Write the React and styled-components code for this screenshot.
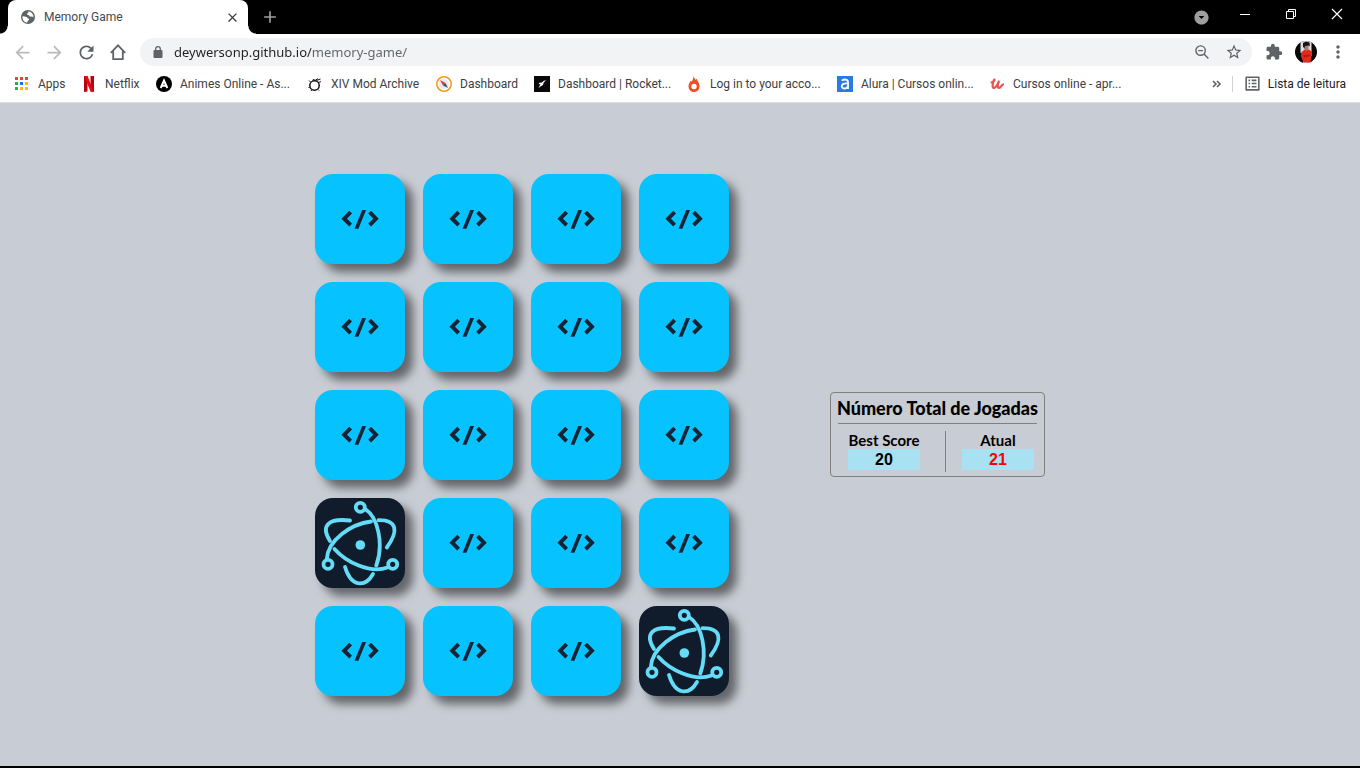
import React from "react";
import styled, { createGlobalStyle, css } from "styled-components";
import {
  MdAdd,
  MdArrowBack,
  MdArrowDropDownCircle,
  MdArrowForward,
  MdClose,
  MdExtension,
  MdListAlt,
  MdMoreVert,
  MdRefresh,
  MdStarBorder,
} from "react-icons/md";

const GlobalStyle = createGlobalStyle`
  *, *::before, *::after { box-sizing: border-box; }
  body {
    margin: 0;
    font-family: Roboto, "Open Sans", sans-serif;
    font-size: 12px;
    color: #3c4043;
  }
  button, input { font: inherit; color: inherit; }
`;

const Window = styled.div`
  display: flex;
  flex-direction: column;
  min-height: 100vh;
  border-bottom: 2px solid #000;
  background: #c8ccd4;
`;

const TabStrip = styled.header`
  display: flex;
  height: 34px;
  padding-left: 8px;
  background: #000;
`;

const Tab = styled.div`
  position: relative;
  display: flex;
  align-items: center;
  gap: 8px;
  width: 240px;
  padding: 0 8px 0 12px;
  border-radius: 8px 8px 0 0;
  background: #fff;
  color: #45494d;

  &::before,
  &::after {
    content: "";
    position: absolute;
    bottom: 0;
    width: 8px;
    height: 8px;
  }
  &::before {
    right: 100%;
    background: radial-gradient(circle at 0 0, #000 7px, #fff 8px);
  }
  &::after {
    left: 100%;
    background: radial-gradient(circle at 100% 0, #000 7px, #fff 8px);
  }
`;

const TabTitle = styled.span`
  flex: 1;
  line-height: 16px;
`;

const IconButton = styled.button`
  display: inline-flex;
  align-items: center;
  justify-content: center;
  flex: none;
  width: ${({ $width = 28 }) => $width}px;
  height: ${({ $height = 28 }) => $height}px;
  padding: 0;
  border: 0;
  border-radius: 50%;
  background: none;
  color: ${({ $color = "#5f6368" }) => $color};
`;

const NewTabSlot = styled.div`
  display: flex;
  align-items: center;
  flex: 1;
  padding-left: 8px;
`;

const Caption = styled.div`
  display: flex;
  align-items: flex-start;
`;

const MenuSlot = styled.div`
  display: flex;
  align-items: center;
  height: 34px;
  margin-right: 7px;
`;

const Toolbar = styled.nav`
  display: flex;
  align-items: center;
  gap: 4px;
  height: 36px;
  padding: 0 8px;
  background: #fff;
`;

const Omnibox = styled.form`
  display: flex;
  align-items: center;
  flex: 1;
  gap: 4px;
  height: 28px;
  margin: 0 4px;
  padding: 0 4px 0 11px;
  border-radius: 14px;
  background: #f1f3f4;
  color: #5f6368;
`;

const AddressInput = styled.input`
  flex: 1;
  min-width: 0;
  height: 20px;
  margin-left: 5px;
  padding: 0;
  border: 0;
  outline: 0;
  font-family: "Noto Sans", "Open Sans", sans-serif;
  font-size: 13px;
  line-height: 20px;
  color: transparent;
  background: linear-gradient(90deg, #202124 137px, #5f6368 137px);
  background-clip: text;
  -webkit-background-clip: text;
`;

const BookmarkBar = styled.nav`
  display: flex;
  align-items: center;
  height: 33px;
  padding: 0 14px 5px;
  border-bottom: 1px solid #dadce0;
  background: #fff;
`;

const bookmarkLook = css`
  display: flex;
  align-items: center;
  gap: 8px;
  line-height: 16px;
  white-space: nowrap;
  text-decoration: none;
  color: #3c4043;
  svg { flex: none; }
`;

const Bookmark = styled.a`
  ${bookmarkLook}
  width: ${({ $width }) => $width}px;
`;

const BarEnd = styled.div`
  display: flex;
  align-items: center;
  gap: 10px;
  margin-left: auto;
`;

const Separator = styled.span`
  width: 1px;
  height: 16px;
  background: #cfd1d4;
`;

const ReadingList = styled.button`
  ${bookmarkLook}
  gap: 6px;
  padding: 0;
  border: 0;
  background: none;
  color: #202124;
  > svg { color: #5f6368; }
`;

const Game = styled.main`
  display: flex;
  flex: 1;
  align-items: center;
  justify-content: center;
  gap: 101px;
`;

const Board = styled.section`
  display: grid;
  grid-template-columns: repeat(4, 90px);
  gap: 18px;
`;

const Card = styled.button`
  width: 90px;
  height: 90px;
  padding: 0;
  border: 0;
  border-radius: 18px;
  background: ${({ $open }) => ($open ? "#101c2c" : "#06c2ff")};
  box-shadow: 8px 8px 10px rgba(0, 0, 0, 0.5);
  svg { display: block; }
`;

const ScorePanel = styled.section`
  width: 215px;
  padding: 5px 7px 4px;
  border: 1px solid #808080;
  border-radius: 4px;
  font-family: Lato, sans-serif;
  color: #000;
`;

const ScoreTitle = styled.h1`
  display: flex;
  justify-content: center;
  margin: 0;
  padding-bottom: 5px;
  border-bottom: 1px solid #808080;
  font-size: 18px;
  font-weight: 900;
  line-height: 20px;
  white-space: nowrap;
`;

const ScoreRow = styled.div`
  display: flex;
  justify-content: space-between;
  padding: 7px 3px 0 10px;
`;

const Score = styled.div`
  display: flex;
  flex-direction: column;
  width: 72px;
  text-align: center;
`;

const ScoreLabel = styled.span`
  font-size: 15px;
  font-weight: 700;
  line-height: 18px;
  white-space: nowrap;
`;

const ScoreValue = styled.output`
  background: #a8e1f1;
  font: bold 16px/21px "Liberation Sans", Arial, sans-serif;
  color: ${({ $color }) => $color};
`;

const ScoreDivider = styled.span`
  width: 1px;
  height: 41px;
  margin-left: 9px;
  background: #808080;
`;

const CodeMark = () => (
  <svg width="90" height="90" viewBox="0 0 90 90" fill="none" stroke="#152332" strokeWidth="3.9" aria-hidden="true">
    <path d="M35.600 38.200 29.200 44.700l6.400 6.500M54.600 38.200 61 44.700l-6.400 6.500" />
    <path fill="#152332" stroke="none" d="M47.200 36h3.800L43.400 54.700h-3.800z" />
  </svg>
);

const ElectronMark = () => (
  <svg width="90" height="90" viewBox="0 0 90 90" fill="none" stroke="#65dcf7" strokeWidth="3.8" strokeLinecap="round" aria-hidden="true">
    <circle cx="45.3" cy="9.3" r="4.500" />
    <circle cx="13" cy="66.3" r="4.500" />
    <circle cx="77.7" cy="66.3" r="4.500" />
    <circle cx="45.3" cy="47" r="4.800" fill="#65dcf7" stroke="none" />
    <path d="M50 11C63 19 69 46 61.300 67.500" />
    <path d="M11.800 61C13 42 36 26 56 23.500" />
    <path d="M19.500 51C31 64 55 76 72.500 69.500" />
    <path d="M35 22.500C14 20 5 27 15 43" />
    <path d="M63.500 22.200C82 22 84 33 71.800 49.500" />
    <path d="M30 69C36 89 50 90 58 76" />
  </svg>
);

const GlobeIcon = () => (
  <svg width="16" height="16" viewBox="0 0 16 16" aria-hidden="true">
    <circle cx="8" cy="8" r="7" fill="#5f6368" />
    <path
      fill="#fff"
      d="M2.500 7.200c1.300.2 3 .2 4.200.8.800.4.600 1.300 1.500 1.500 1 .2 1.200.8.600 1.500-.8.900-1.300 1.200-1.600 2.600-2.900-.3-5-2.900-4.700-6.400zM8.500 2.300c-.2.700.2 1.300-.5 1.700-.8.400-1.300.9-.9 1.600.5.700 1.700.3 2.200 1.100.4.700.9 1.100 1.700.9.800-.3 1.400-.2 2.500.6-.1-3-2-5.300-5-5.900z"
    />
  </svg>
);

const LockIcon = () => (
  <svg width="14" height="14" viewBox="0 0 14 14" fill="none" aria-hidden="true">
    <path fill="currentColor" d="M3.500 5h7a1 1 0 0 1 1 1v6a1 1 0 0 1-1 1h-7a1 1 0 0 1-1-1V6a1 1 0 0 1 1-1z" />
    <path stroke="currentColor" strokeWidth="1.300" d="M4.700 5.500V4a2.300 2.300 0 0 1 4.600 0v1.500" />
  </svg>
);

const HomeIcon = () => (
  <svg width="16" height="16" viewBox="0 0 16 16" fill="none" stroke="currentColor" strokeWidth="1.8" aria-hidden="true">
    <path d="M.8 8.800 8 1.400l7.200 7.400M3.200 7.200v7.900h9.600V7.200" />
  </svg>
);

const ZoomOutIcon = () => (
  <svg width="14" height="14" viewBox="0 0 14 14" fill="none" stroke="currentColor" strokeWidth="1.400" aria-hidden="true">
    <circle cx="5.600" cy="5.600" r="4.700" />
    <path d="M3.200 5.600H8M9 9l4.400 4.400" />
  </svg>
);

const Avatar = () => (
  <svg width="22" height="22" viewBox="0 0 22 22" aria-hidden="true">
    <clipPath id="avatarRound"><circle cx="11" cy="11" r="11" /></clipPath>
    <g clipPath="url(#avatarRound)">
      <path fill="#090909" d="M0 0h22v22H0z" />
      <path fill="#d9dde1" d="M5.500 0h11v22h-11z" />
      <path fill="#090909" d="M5 12h3v10H5zM15 15h2v7h-2z" />
      <path fill="#e32a1d" d="M6.500 11 10 8.500h4l3 2.500-.5 5-1 5.500H8.500L6 15z" />
      <path fill="#a82018" d="m8 14 6-.5 1.500 1.500L9 16.500z" />
      <path fill="#b47860" d="M9 4h4.500v4.500L11.500 10 9 8z" />
      <path fill="#171315" d="M8 6V2l3-1.500 3.500 1 .5 4L14 4.500l-4 .5L9.500 7z" />
    </g>
  </svg>
);

const MinimizeIcon = () => (
  <svg width="12" height="12" viewBox="0 0 12 12" stroke="currentColor" aria-hidden="true"><path d="M1 6.500h10" /></svg>
);

const RestoreIcon = () => (
  <svg width="12" height="12" viewBox="0 0 12 12" fill="none" stroke="currentColor" aria-hidden="true">
    <path d="M1.500 3.500h7v7h-7zM3.500 3V1.500h7v7H9" />
  </svg>
);

const CloseIcon = () => (
  <svg width="12" height="12" viewBox="0 0 12 12" stroke="currentColor" strokeWidth="1.200" aria-hidden="true">
    <path d="m1 1 10 10M11 1 1 11" />
  </svg>
);

const Favicon = ({ children }) => (
  <svg width="16" height="16" viewBox="0 0 16 16" fill="none" aria-hidden="true">{children}</svg>
);

const appColors = ["#ea4335", "#ea4335", "#ea4335", "#34a853", "#1a73e8", "#fbbc04", "#34a853", "#fbbc04", "#fbbc04"];

const bookmarks = [
  {
    label: "Apps",
    width: 67,
    icon: appColors.map((fill, i) => (
      <path key={i} fill={fill} d={`M${1 + (i % 3) * 5} ${1 + Math.floor(i / 3) * 5}h3v3h-3z`} />
    )),
  },
  {
    label: "Netflix",
    width: 75,
    icon: (
      <>
        <path fill="#b3070f" d="M3 0h3.500v15.500L3 16zM9.500 0H13v16l-3.500-.5z" />
        <path fill="#e50914" d="M3 0h3.500L13 16l-3.500-.5z" />
      </>
    ),
  },
  {
    label: "Animes Online - As...",
    width: 151,
    icon: (
      <>
        <circle cx="8" cy="8" r="8" fill="#000" />
        <path stroke="#fff" strokeWidth="2" d="M4.700 12 8 4.500l3.300 7.500M6 9.800h4" />
      </>
    ),
  },
  {
    label: "XIV Mod Archive",
    width: 129,
    icon: (
      <>
        <circle cx="7.500" cy="9.500" r="4.700" stroke="#111" strokeWidth="1.500" />
        <path stroke="#111" strokeWidth="1" d="M3.500 6 2 4.500M6 5l.5-2 1.500 1.500L11 2.500M9.500 4.500l4-1.500M11 6.500l3-.8M2.500 11l-1 1M4.500 14l-.5 1M11 13.500l1 1" />
      </>
    ),
  },
  {
    label: "Dashboard",
    width: 98,
    icon: (
      <>
        <circle cx="8" cy="8" r="7.200" fill="#fff" stroke="#f7981d" strokeWidth="1.600" />
        <circle cx="8" cy="8" r="5" fill="#e4ebf0" />
        <path fill="#d93f3c" d="m4 4 5.200 2.800-2.400 2.400z" />
        <path fill="#3f4c5c" d="M12 12 6.800 9.200l2.400-2.400z" />
      </>
    ),
  },
  {
    label: "Dashboard | Rocket...",
    width: 152,
    icon: (
      <>
        <path fill="#08080b" d="M0 0h16v16H0z" />
        <path fill="#fff" d="M12 4 9.500 5 8 6.500l-2.500.2L4.500 8l2 .2-.7 1.400L4.500 12l2.300-1.700L9 9l.5-2z" />
      </>
    ),
  },
  {
    label: "Log in to your acco...",
    width: 151,
    icon: (
      <path
        fill="#f04e23"
        fillRule="evenodd"
        d="M7.500 0c.5 2 1.500 2.500 2 4l1.200-1.200C11 5 13.500 6.500 13.500 10.500a5.500 5.500 0 0 1-11 0c0-2.500 1-4 2-5.500L6 5.500C6.500 4 7.500 2.500 7.500 0zM8 7.800a2.700 2.700 0 1 0 0 5.400 2.700 2.700 0 0 0 0-5.400z"
      />
    ),
  },
  {
    label: "Alura | Cursos onlin...",
    width: 152,
    icon: (
      <>
        <path fill="#2a7ae4" d="M0 0h16v16H0z" />
        <path stroke="#fff" strokeWidth="1.800" d="M5 4.800C6 3 11 2.800 11 6v7M11 7.500C7 7 4.800 8 4.800 10.300c0 3 5 3 6.200-.3" />
      </>
    ),
  },
  {
    label: "Cursos online - apr...",
    width: 150,
    icon: (
      <path
        stroke="#ec5252"
        strokeWidth="2.200"
        strokeLinecap="round"
        strokeLinejoin="round"
        d="M2.500 6.500C4.500 6 6 4 5.500 3.500 4.500 4 2.500 11.500 4.500 12 6.300 12 8.800 8 9.800 5.500 8.800 8 8 11.500 10 11.800c2 0 2-2.500 4-3.300"
      />
    ),
  },
];

const cards = Array.from({ length: 20 }, (_, id) => ({ id, open: id === 12 || id === 19 }));

export default function App() {
  return (
    <>
      <GlobalStyle />
      <Window>
        <TabStrip>
          <Tab>
            <GlobeIcon />
            <TabTitle>Memory Game</TabTitle>
            <IconButton $width={16} $height={16} $color="#3c4043" aria-label="Close tab"><MdClose size={15} /></IconButton>
          </Tab>
          <NewTabSlot>
            <IconButton $color="#9e9e9e" aria-label="New tab"><MdAdd size={20} /></IconButton>
          </NewTabSlot>
          <Caption>
            <MenuSlot>
              <IconButton $color="#9e9e9e" aria-label="Search tabs"><MdArrowDropDownCircle size={17} /></IconButton>
            </MenuSlot>
            <IconButton $width={46} $color="#fff" aria-label="Minimize"><MinimizeIcon /></IconButton>
            <IconButton $width={46} $color="#fff" aria-label="Restore"><RestoreIcon /></IconButton>
            <IconButton $width={46} $color="#fff" aria-label="Close"><CloseIcon /></IconButton>
          </Caption>
        </TabStrip>

        <Toolbar aria-label="Browser">
          <IconButton $color="#bababa" aria-label="Back"><MdArrowBack size={21} /></IconButton>
          <IconButton $color="#bababa" aria-label="Forward"><MdArrowForward size={21} /></IconButton>
          <IconButton aria-label="Reload"><MdRefresh size={21} /></IconButton>
          <IconButton aria-label="Home"><HomeIcon /></IconButton>
          <Omnibox onSubmit={(event) => event.preventDefault()}>
            <LockIcon />
            <AddressInput aria-label="Address" defaultValue="deywersonp.github.io/memory-game/" />
            <IconButton type="button" aria-label="Zoom"><ZoomOutIcon /></IconButton>
            <IconButton type="button" aria-label="Bookmark this page"><MdStarBorder size={18} /></IconButton>
          </Omnibox>
          <IconButton aria-label="Extensions"><MdExtension size={18} /></IconButton>
          <IconButton aria-label="Profile"><Avatar /></IconButton>
          <IconButton aria-label="Menu"><MdMoreVert size={20} /></IconButton>
        </Toolbar>

        <BookmarkBar aria-label="Bookmarks">
          {bookmarks.map(({ label, width, icon }) => (
            <Bookmark key={label} href="#" $width={width}>
              <Favicon>{icon}</Favicon>
              {label}
            </Bookmark>
          ))}
          <BarEnd>
            <IconButton $width={10} $height={16} aria-label="More bookmarks">
              <svg width="10" height="8" viewBox="0 0 10 8" fill="none" stroke="currentColor" strokeWidth="1.600" aria-hidden="true">
                <path d="m1 1 3 3-3 3M5 1l3 3-3 3" />
              </svg>
            </IconButton>
            <Separator />
            <ReadingList>
              <MdListAlt size={19} />
              Lista de leitura
            </ReadingList>
          </BarEnd>
        </BookmarkBar>

        <Game>
          <Board aria-label="Cards">
            {cards.map(({ id, open }) => (
              <Card key={id} $open={open} aria-label={open ? "Electron" : "Hidden card"}>
                {open ? <ElectronMark /> : <CodeMark />}
              </Card>
            ))}
          </Board>
          <ScorePanel>
            <ScoreTitle>Número Total de Jogadas</ScoreTitle>
            <ScoreRow>
              <Score>
                <ScoreLabel id="best">Best Score</ScoreLabel>
                <ScoreValue aria-labelledby="best" $color="#000">20</ScoreValue>
              </Score>
              <ScoreDivider />
              <Score>
                <ScoreLabel id="current">Atual</ScoreLabel>
                <ScoreValue aria-labelledby="current" $color="#f00">21</ScoreValue>
              </Score>
            </ScoreRow>
          </ScorePanel>
        </Game>
      </Window>
    </>
  );
}
